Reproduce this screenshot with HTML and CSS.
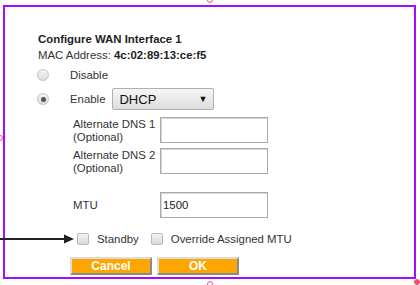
FILE: index.html
```html
<!DOCTYPE html>
<html>
<head>
<meta charset="utf-8">
<link rel="stylesheet" href="styles.css">
</head>
<body>
<div class="frame">
  <div class="form">
    <div class="title">Configure WAN Interface 1</div>
    <div class="mac">MAC Address: <b>4c:02:89:13:ce:f5</b></div>
    <div class="opt-row">
      <span class="radio"></span>
      <span class="opt-label">Disable</span>
    </div>
    <div class="opt-row enable-row">
      <span class="radio checked"></span>
      <span class="opt-label">Enable</span>
      <div class="select"><span>DHCP</span><span class="caret">&#9660;</span></div>
    </div>
    <div class="fields">
      <div class="flabel">Alternate DNS 1<br>(Optional)</div>
      <div class="input"></div>
      <div class="flabel">Alternate DNS 2<br>(Optional)</div>
      <div class="input"></div>
      <div class="flabel mtu-label">MTU</div>
      <div class="input mtu-input">1500</div>
    </div>
    <div class="checks">
      <span class="checkbox"></span>
      <span class="clabel">Standby</span>
      <span class="checkbox"></span>
      <span class="clabel">Override Assigned MTU</span>
    </div>
    <div class="buttons">
      <div class="btn cancel">Cancel</div>
      <div class="btn ok">OK</div>
    </div>
  </div>
</div>
<svg class="arrow" width="80" height="12" viewBox="0 0 80 12">
  <line x1="0" y1="6" x2="66" y2="6" stroke="#222" stroke-width="2"/>
  <polygon points="64,1.5 74,6 64,10.5" fill="#222"/>
</svg>
<span class="handle h-top"></span>
<span class="handle h-left"></span>
<span class="handle h-bottom"></span>
<span class="handle h-corner"></span>
</body>
</html>
```
FILE: styles.css
```css
html, body {
  margin: 0;
  padding: 0;
  background: #fff;
}
body {
  position: relative;
  width: 420px;
  height: 285px;
  overflow: hidden;
  font-family: "Liberation Sans", Arial, sans-serif;
  font-size: 11.4px;
  color: #222;
}
.frame {
  box-sizing: border-box;
  margin: 5px 0 0 3px;
  width: 413px;
  height: 274px;
  border: 2px solid #a30cff;
}
.form {
  padding: 25px 0 0 33px;
}
.title {
  font-weight: bold;
  line-height: 14px;
}
.mac {
  margin-top: 2px;
  line-height: 14px;
  color: #333;
}
.mac b { color: #222; }
.opt-row {
  display: flex;
  align-items: center;
  height: 20px;
  margin-top: 3px;
}
.enable-row {
  height: 24px;
  margin-top: 2px;
}
.radio {
  box-sizing: border-box;
  width: 12px;
  height: 12px;
  margin-left: -1px;
  border-radius: 50%;
  border: 1px solid #c4c4c4;
  background: linear-gradient(#f4f4f4, #dcdcdc);
  display: flex;
  align-items: center;
  justify-content: center;
}
.radio.checked::after {
  content: "";
  width: 5px;
  height: 5px;
  border-radius: 50%;
  background: #555;
}
.opt-label {
  margin-left: 21px;
  color: #333;
}
.select {
  box-sizing: border-box;
  margin-left: 7px;
  width: 102px;
  height: 22px;
  border: 1px solid #b0b0b0;
  border-radius: 2px;
  background: linear-gradient(#f6f6f6, #dedede);
  display: flex;
  align-items: center;
  justify-content: space-between;
  padding: 0 6px 0 6px;
  font-size: 13px;
  color: #111;
}
.caret {
  font-size: 9px;
  color: #111;
}
.fields {
  display: grid;
  grid-template-columns: 87px 108px;
  grid-template-rows: 26px 26px 39px;
  row-gap: 5px;
  margin: 6px 0 0 35px;
}
.flabel {
  line-height: 12.5px;
  padding-top: 1px;
  color: #333;
}
.mtu-label {
  align-self: end;
  height: 26px;
  padding-top: 0;
  display: flex;
  align-items: center;
}
.mtu-input {
  align-self: end;
}
.input {
  box-sizing: border-box;
  height: 26px;
  border: 1px solid #a9a9a9;
  box-shadow: inset 1px 1px 0 #d6d6d6;
  background: #fff;
  padding-left: 2px;
  display: flex;
  align-items: center;
  color: #222;
}
.checks {
  display: flex;
  align-items: center;
  height: 16px;
  margin: 13px 0 0 39px;
}
.checkbox {
  box-sizing: border-box;
  width: 12px;
  height: 12px;
  border: 1px solid #b8b8b8;
  border-radius: 2px;
  background: linear-gradient(#f4f4f4, #dadada);
}
.clabel {
  margin-left: 8px;
  margin-right: 12px;
  color: #333;
}
.buttons {
  display: flex;
  gap: 5px;
  margin: 10px 0 0 32px;
}
.btn {
  box-sizing: border-box;
  width: 82px;
  height: 18px;
  background: #ffa500;
  color: #fff;
  font-weight: bold;
  font-size: 12px;
  text-align: center;
  line-height: 14px;
  border: 2px solid;
  border-color: #dcdcdc #8a8a8a #8a8a8a #dcdcdc;
}
.arrow {
  position: absolute;
  left: 0;
  top: 233px;
}
.handle {
  position: absolute;
  width: 6px;
  height: 6px;
  box-sizing: border-box;
  border-radius: 50%;
  border: 1px solid #f0506e;
}
.h-top { left: 207px; top: -3px; }
.h-left { left: -3px; top: 135px; }
.h-bottom { left: 207px; top: 281px; }
.h-corner { left: 414px; top: 279px; background: #f0506e; }
```
